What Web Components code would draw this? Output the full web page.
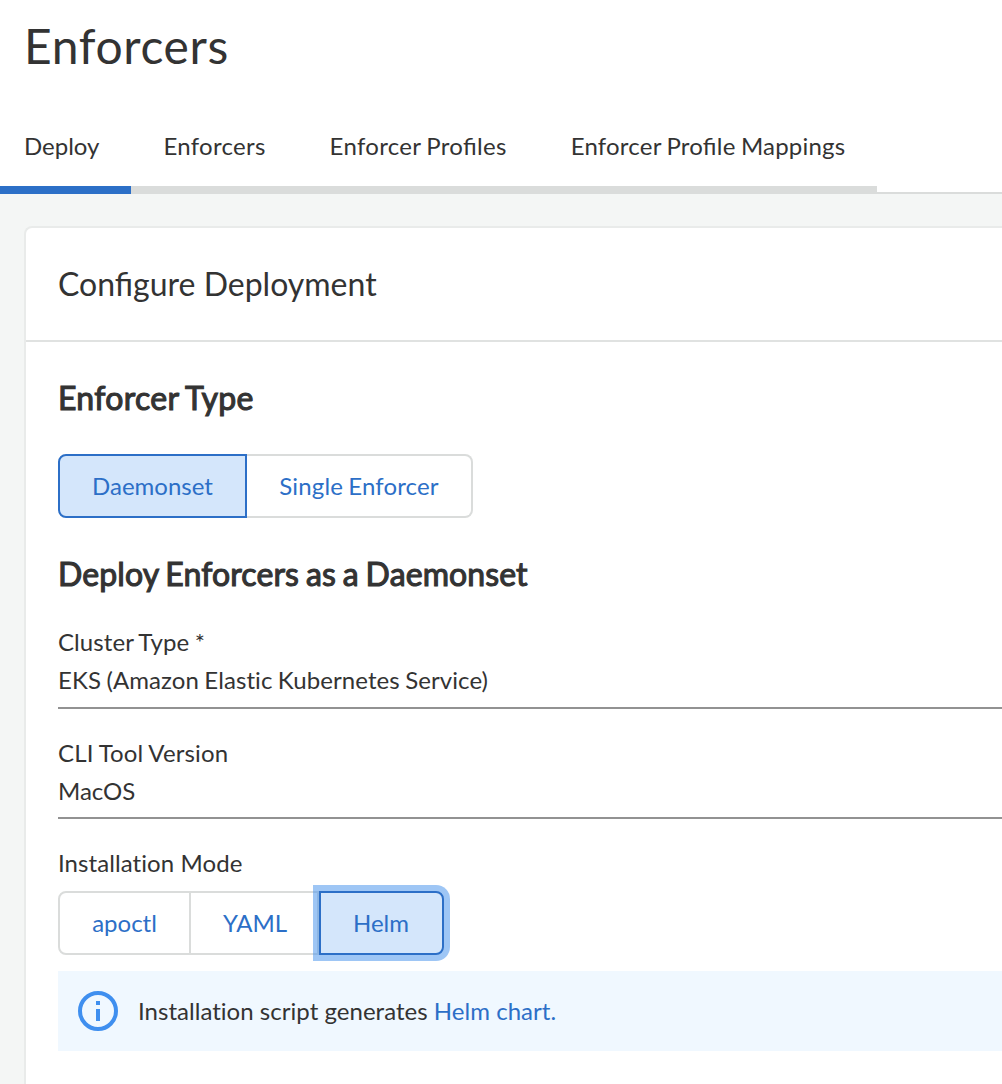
<!DOCTYPE html>
<html lang="en">
<head>
<meta charset="utf-8">
<title>Enforcers</title>
<style>
  html, body { margin: 0; height: 100%; overflow: hidden; }
  body { font: 24px/32px Lato, sans-serif; color: #333; background: #f4f6f5; }
</style>
</head>
<body>
<app-page>
  <span slot="title">Enforcers</span>
  <tab-bar slot="tabs">
    <tab-item active>Deploy</tab-item>
    <tab-item style="letter-spacing:.28px">Enforcers</tab-item>
    <tab-item style="letter-spacing:.31px;word-spacing:-1px">Enforcer Profiles</tab-item>
    <tab-item style="letter-spacing:.21px;word-spacing:-1px">Enforcer Profile Mappings</tab-item>
  </tab-bar>
  <config-card>
    <span slot="title">Configure Deployment</span>
    <section-heading style="letter-spacing:.32px;word-spacing:-1.5px">Enforcer Type</section-heading>
    <button-group style="margin-top:34px">
      <toggle-button selected style="width:189px">Daemonset</toggle-button>
      <toggle-button style="width:226px;letter-spacing:.14px;word-spacing:-1px">Single Enforcer</toggle-button>
    </button-group>
    <section-heading style="margin-top:34px;letter-spacing:.1px;word-spacing:-1.4px">Deploy Enforcers as a Daemonset</section-heading>
    <form-field style="margin-top:30px"><span slot="label" style="letter-spacing:.08px;word-spacing:-.7px">Cluster Type *</span><span style="letter-spacing:.08px;word-spacing:-.8px">EKS (Amazon Elastic Kubernetes Service)</span></form-field>
    <form-field style="margin-top:28px"><span slot="label" style="letter-spacing:.14px;word-spacing:-.4px">CLI Tool Version</span>MacOS</form-field>
    <field-label style="margin-top:28px">Installation Mode</field-label>
    <button-group style="margin-top:12px">
      <toggle-button style="width:133px">apoctl</toggle-button>
      <toggle-button style="width:128px;text-indent:2px">YAML</toggle-button>
      <toggle-button selected focused style="width:125px;text-indent:-1px">Helm</toggle-button>
    </button-group>
    <info-banner style="margin-top:16px">Installation script generates <text-link>Helm chart.</text-link></info-banner>
  </config-card>
</app-page>
<script>
  const define = (name, html) => {
    const template = document.createElement('template');
    template.innerHTML = html;
    customElements.define(name, class extends HTMLElement {
      constructor() {
        super();
        this.attachShadow({ mode: 'open' }).append(template.content.cloneNode(true));
      }
    });
  };

  define('app-page', `<style>
    :host { display: flex; flex-direction: column; height: 100%; }
    header { box-sizing: border-box; flex: none; height: 194px; background: #fff; border-bottom: 2px solid #dadcdb;
             display: flex; flex-direction: column; justify-content: space-between; }
    h1 { margin: 17px 0 0 24px; font-size: 48px; line-height: 58px; font-weight: 400; letter-spacing: .65px; }
    ::slotted(tab-bar) { margin-bottom: -2px; }
    main { flex: 1; padding: 32px 0 0 24px; display: flex; min-height: 0; }
  </style>
  <header><h1><slot name="title"></slot></h1><slot name="tabs"></slot></header>
  <main><slot></slot></main>`);

  define('tab-bar', `<style>:host { display: flex; font-feature-settings: "liga" 1; }</style><slot></slot>`);

  define('tab-item', `<style>
    :host { box-sizing: border-box; display: block; height: 80px; padding: 16px 32px 0; border-bottom: 8px solid #dadcdb; white-space: nowrap; }
    :host([active]) { padding-left: 24px; border-color: #2c6fc7; }
  </style><slot></slot>`);

  define('config-card', `<style>
    :host { flex: 1; display: flex; flex-direction: column; background: #fff; border: 2px solid #e9ebea;
            border-right: 0; border-bottom: 0; border-top-left-radius: 8px; }
    h2 { margin: 0; padding: 0 32px; font-size: 32px; line-height: 112px; font-weight: 400; border-bottom: 2px solid #e0e2e1; }
    .body { padding: 34px 0 0 32px; display: flex; flex-direction: column; font-variant-ligatures: none; }
  </style><h2><slot name="title"></slot></h2><div class="body"><slot></slot></div>`);

  define('section-heading', `<style>
    :host { display: block; font-size: 32px; line-height: 44px; height: 44px; }
    h3 { margin: 0; font: inherit; font-variant-ligatures: none; -webkit-text-stroke: 1.1px currentColor; }
  </style><h3><slot></slot></h3>`);

  define('button-group', `<style>:host { display: flex; height: 64px; }</style><slot></slot>`);

  define('toggle-button', `<style>
    :host { box-sizing: border-box; display: block; height: 64px; }
    button { box-sizing: border-box; display: block; width: 100%; height: 64px; padding: 0; margin: 0; font: inherit;
             letter-spacing: inherit; word-spacing: inherit; text-indent: inherit;
             color: #2c6fc7; background: #fff; border: 2px solid #dadcdb; border-left-width: 0; }
    :host(:first-child) button { border-left-width: 2px; border-radius: 8px 0 0 8px; }
    :host(:last-child) button { border-radius: 0 8px 8px 0; }
    :host([selected]) button { background: #d4e6fb; border: 2px solid #2c6fc7; }
    :host([focused]) button { box-shadow: 0 0 0 6px rgba(61,141,235,.5); }
  </style><button type="button"><slot></slot></button>`);

  define('field-label', `<style>:host { display: block; line-height: 32px; letter-spacing: .08px; }</style><slot></slot>`);

  define('form-field', `<style>
    :host { box-sizing: border-box; display: block; height: 82.5px; border-bottom: 2px solid #929292; }
    div { line-height: 32px; }
    .value { margin-top: 6px; }
  </style><div><slot name="label"></slot></div><div class="value"><slot></slot></div>`);

  define('info-banner', `<style>
    :host { box-sizing: border-box; display: flex; align-items: center; gap: 20px; height: 80px; padding: 0 20px; background: #f0f8ff; }
    svg { flex: none; display: block; }
    div { letter-spacing: .03px; }
  </style>
  <svg width="40" height="40" viewBox="0 0 40 40" fill="none"><circle cx="20" cy="20" r="18" stroke="#3f8fef" stroke-width="4"/><path d="M18 10h4v4h-4zM18 18h4v12h-4z" fill="#3f8fef"/></svg>
  <div><slot></slot></div>`);

  define('text-link', `<style>:host { color: #2c6fc7; }</style><slot></slot>`);
</script>
</body>
</html>
